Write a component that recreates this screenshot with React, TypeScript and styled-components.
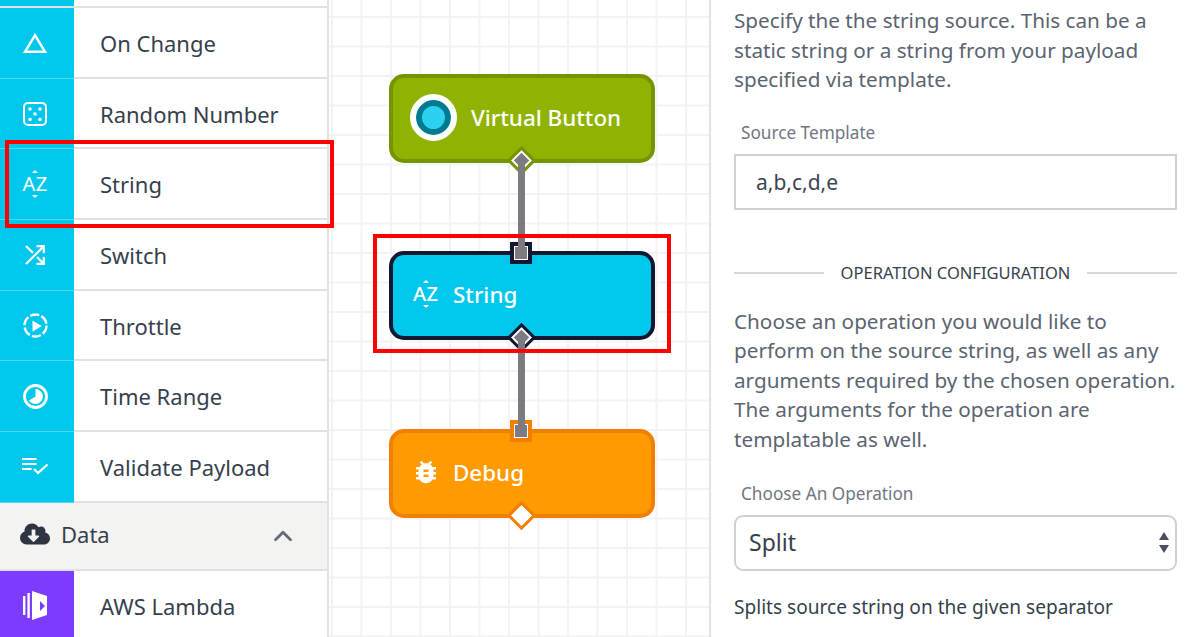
import React from "react";
import styled, { createGlobalStyle } from "styled-components";
import { ChevronUp } from "lucide-react";
import { FaCloudDownloadAlt } from "react-icons/fa";
import { MdBugReport } from "react-icons/md";

const FONT = "'Noto Sans', 'Open Sans', sans-serif";

const GlobalStyle = createGlobalStyle`
  html, body {
    margin: 0;
    padding: 0;
    background: #fff;
    overflow: hidden;
  }
  * { box-sizing: border-box; }
`;

const Page = styled.div`
  display: flex;
  width: 1200px;
  height: 637px;
  overflow: hidden;
  font-family: ${FONT};
  color: #363f4c;
`;

const Sidebar = styled.aside`
  position: relative;
  width: 329px;
  flex: none;
  border-right: 2px solid #e0e2e6;
  display: flex;
  flex-direction: column;
`;

const Stub = styled.div`
  height: 8px;
  flex: none;
  background: linear-gradient(to right, #00c7ec 74px, #fff 74px);
  border-bottom: 2px solid #dfe1e5;
`;

const Row = styled.div`
  height: 70.7px;
  flex: none;
  display: flex;
  align-items: stretch;
  border-bottom: 2px solid #dfe1e5;
  &:last-child { border-bottom: 0; }
`;

const IconCell = styled.div<{ $tone: string }>`
  width: 74px;
  margin-bottom: -2px;
  padding-right: 4px;
  flex: none;
  display: flex;
  align-items: center;
  justify-content: center;
  color: #fff;
  background: ${(p) => p.$tone};
  border-bottom: 1px solid rgba(255, 255, 255, 0.3);
`;

const RowLabel = styled.div`
  padding: 1px 0 0 26px;
  display: flex;
  align-items: center;
  font-size: 22px;
`;

const GroupHeader = styled.div`
  height: 68px;
  flex: none;
  display: flex;
  align-items: center;
  padding: 0 29px 3px 20px;
  background: #f3f3f2;
  border-bottom: 2px solid #dfe1e5;
  font-size: 22px;
  gap: 11px;
`;

const GroupChevron = styled.span`
  margin: 4px 0 0 auto;
  display: flex;
  color: #636a75;
`;

const AzIcon = styled.span<{ $size: number }>`
  position: relative;
  display: inline-block;
  width: 25px;
  font-size: ${(p) => p.$size}px;
  line-height: 1;
  letter-spacing: 0.5px;
  text-align: center;
  color: #fff;
  &::before, &::after {
    content: "";
    position: absolute;
    left: 50%;
    margin-left: -3px;
    border-left: 3px solid transparent;
    border-right: 3px solid transparent;
  }
  &::before { top: -4px; border-bottom: 3px solid #fff; }
  &::after { bottom: -4px; border-top: 3px solid #fff; }
`;

const Canvas = styled.main`
  position: relative;
  width: 380px;
  flex: none;
  background-color: #fff;
  background-image:
    linear-gradient(to right, #f3f3f5 1.5px, transparent 1.5px),
    linear-gradient(to bottom, #f3f3f5 1.5px, transparent 1.5px);
  background-size: 29.5px 29.5px;
  background-position: 2px 16px;
`;

const Wire = styled.div<{ $top: number }>`
  position: absolute;
  left: 189px;
  top: ${(p) => p.$top}px;
  width: 6.5px;
  height: 92px;
  background: #7d7b80;
  z-index: 3;
`;

const Node = styled.div<{ $top: number; $fill: string; $line: string }>`
  position: absolute;
  left: 60px;
  top: ${(p) => p.$top}px;
  width: 266px;
  height: 88.5px;
  padding-bottom: 2px;
  display: flex;
  align-items: center;
  border-radius: 15px;
  border: 4px solid ${(p) => p.$line};
  background: ${(p) => p.$fill};
  color: #fff;
  font-size: 22.4px;
  font-weight: 500;
`;

const NodeIcon = styled.span<{ $width: number; $inset: number }>`
  width: ${(p) => p.$width}px;
  padding-left: ${(p) => p.$inset}px;
  flex: none;
  display: flex;
  justify-content: center;
`;

const ButtonDot = styled.span`
  display: block;
  width: 47px;
  height: 47px;
  border-radius: 50%;
  background: #2cd0f0;
  border: 6px solid #fff;
  box-shadow: inset 0 0 0 6px #007a90;
`;

const OutPort = styled.span<{ $line: string; $inner: string }>`
  position: absolute;
  left: 120.5px;
  bottom: -9.5px;
  width: 15px;
  height: 15px;
  transform: rotate(45deg);
  background: ${(p) => p.$inner};
  border: 2px solid #fff;
  outline: 3px solid ${(p) => p.$line};
  z-index: 2;
`;

const InPort = styled.span<{ $line: string }>`
  position: absolute;
  left: 121px;
  top: -9px;
  width: 14px;
  height: 14px;
  background: #7d7b80;
  border: 1.5px solid #fff;
  outline: 4.5px solid ${(p) => p.$line};
  z-index: 2;
`;

const Highlight = styled.div`
  position: absolute;
  border: 4px solid #ff0000;
  pointer-events: none;
  z-index: 5;
`;

const SidebarHighlight = styled(Highlight)`
  left: 5px;
  top: 140px;
  width: 329px;
  height: 88px;
`;

const CanvasHighlight = styled(Highlight)`
  left: 44px;
  top: 234px;
  width: 298px;
  height: 119px;
`;

const Panel = styled.section`
  flex: 1;
  border-left: 2px solid #e0e2e6;
  padding: 6px 23px 0 23px;
  display: flex;
  flex-direction: column;
`;

const Help = styled.p`
  margin: 0;
  font-size: 20.7px;
  line-height: 29.5px;
  color: #5b6470;
`;

const FieldLabel = styled.label<{ $gap: number }>`
  display: block;
  margin: ${(p) => p.$gap}px 0 9px 7px;
  font-size: 17.2px;
  line-height: 24px;
  color: #6f7782;
`;

const TextInput = styled.div`
  height: 56px;
  border: 2px solid #cdd1d6;
  padding-left: 20px;
  display: flex;
  align-items: center;
  font-size: 21px;
  color: #3c4350;
`;

const SelectBox = styled.div`
  position: relative;
  height: 56px;
  border: 2px solid #cdd1d6;
  border-radius: 9px;
  padding: 0 0 3px 13px;
  display: flex;
  align-items: center;
  font-size: 23px;
  color: #363f4c;
`;

const SelectArrows = styled.svg`
  position: absolute;
  right: 5px;
  top: 15px;
`;

const Divider = styled.div`
  display: flex;
  align-items: center;
  gap: 17px;
  margin: 49px 0 20px;
  font-size: 16.5px;
  line-height: 28px;
  color: #363f4c;
  &::before, &::after {
    content: "";
    flex: 1;
    height: 2px;
    background: #d4d8dd;
  }
`;

const Note = styled.p`
  margin: 22px 0 0;
  font-size: 19.1px;
  line-height: 28px;
  color: #363f4c;
`;

const TriangleIcon = () => (
  <svg width="24" height="20" viewBox="0 0 24 20" fill="none" stroke="#fff" strokeWidth="2.4">
    <path d="M12 2.2 L22 18.8 H2 Z" />
  </svg>
);

const DiceIcon = () => (
  <svg width="24" height="24" viewBox="0 0 24 24" fill="#fff">
    <rect x="1" y="1" width="22" height="22" rx="4" fill="none" stroke="#fff" strokeWidth="2" />
    <circle cx="7" cy="7" r="1.8" />
    <circle cx="17" cy="7" r="1.8" />
    <circle cx="12" cy="12" r="1.8" />
    <circle cx="7" cy="17.5" r="1.8" />
    <circle cx="17" cy="17.5" r="1.8" />
  </svg>
);

const SwitchIcon = () => (
  <svg width="20" height="20" viewBox="0 0 20 20" fill="none" stroke="#fff" strokeWidth="2.2">
    <path d="M1 19 L18.5 1.5 M11.5 1.2 H18.8 V8" />
    <path d="M1 1 L8 8 M12 12 L18.5 18.5 M11.5 18.8 H18.8 V12" />
  </svg>
);

const ThrottleIcon = () => (
  <svg width="25" height="25" viewBox="0 0 25 25" fill="none">
    <circle cx="12.5" cy="12.5" r="11" stroke="#fff" strokeWidth="2.4" strokeDasharray="9.3 2.2" />
    <path d="M9.5 7.5 L18.7 13 L9.5 18.7 Z" fill="#fff" />
  </svg>
);

const ClockIcon = () => (
  <svg width="25" height="25" viewBox="0 0 25 25" fill="none">
    <circle cx="12.5" cy="12.5" r="11" stroke="#fff" strokeWidth="2.8" />
    <path d="M12.5 5 A7.5 7.5 0 1 1 6 16.5 L12.5 12.5 Z" fill="#fff" />
  </svg>
);

const ValidateIcon = () => (
  <svg width="26" height="17" viewBox="0 0 26 17" fill="none" stroke="#fff" strokeWidth="2">
    <path d="M0 1 H14.5 M0 6 H14.5 M0 11 H9.5" />
    <path d="M12 11 L16 15 L25.5 6.5" strokeWidth="2.3" />
  </svg>
);

const LambdaIcon = () => (
  <svg width="24" height="30" viewBox="0 0 24 30" fill="#fff">
    <rect x="0" y="5" width="2.4" height="19" />
    <rect x="4.4" y="2" width="2.4" height="25" />
    <path d="M9 0 L24 5 V24 L9 29 Z M17 10 V20 L22 15 Z" fillRule="evenodd" />
  </svg>
);

const triggers = [
  { label: "On Change", icon: <TriangleIcon /> },
  { label: "Random Number", icon: <DiceIcon /> },
  { label: "String", icon: <AzIcon $size={20}>AZ</AzIcon> },
  { label: "Switch", icon: <SwitchIcon /> },
  { label: "Throttle", icon: <ThrottleIcon /> },
  { label: "Time Range", icon: <ClockIcon /> },
  { label: "Validate Payload", icon: <ValidateIcon /> },
];

export default function App() {
  return (
    <Page>
      <GlobalStyle />
      <Sidebar>
        <Stub />
        {triggers.map((t) => (
          <Row key={t.label}>
            <IconCell $tone="#00c7ec">{t.icon}</IconCell>
            <RowLabel>{t.label}</RowLabel>
          </Row>
        ))}
        <GroupHeader>
          <FaCloudDownloadAlt size={30} color="#2f3540" />
          Data
          <GroupChevron>
            <ChevronUp size={30} strokeWidth={2.2} />
          </GroupChevron>
        </GroupHeader>
        <Row>
          <IconCell $tone="#7c3cff">
            <LambdaIcon />
          </IconCell>
          <RowLabel>AWS Lambda</RowLabel>
        </Row>
        <SidebarHighlight />
      </Sidebar>

      <Canvas>
        <Wire $top={161} />
        <Wire $top={338} />
        <Node $top={74} $fill="#8fb300" $line="#769400">
          <NodeIcon $width={78} $inset={3}>
            <ButtonDot />
          </NodeIcon>
          Virtual Button
          <OutPort $line="#769400" $inner="#7d7b80" />
        </Node>
        <Node $top={251} $fill="#00c7ec" $line="#12182f">
          <NodeIcon $width={60} $inset={5}>
            <AzIcon $size={20}>AZ</AzIcon>
          </NodeIcon>
          String
          <InPort $line="#12182f" />
          <OutPort $line="#12182f" $inner="#7d7b80" />
        </Node>
        <Node $top={429} $fill="#ff9a00" $line="#f27f00">
          <NodeIcon $width={60} $inset={5}>
            <MdBugReport size={30} color="#fff" />
          </NodeIcon>
          Debug
          <InPort $line="#f27f00" />
          <OutPort $line="#f27f00" $inner="#fff" />
        </Node>
        <CanvasHighlight />
      </Canvas>

      <Panel>
        <Help>
          Specify the the string source. This can be a static string or a string from your payload
          specified via template.
        </Help>
        <FieldLabel $gap={26}>Source Template</FieldLabel>
        <TextInput>a,b,c,d,e</TextInput>
        <Divider>OPERATION CONFIGURATION</Divider>
        <Help>
          Choose an operation you would like to perform on the source string, as well as any
          arguments required by the chosen operation. The arguments for the operation are
          templatable as well.
        </Help>
        <FieldLabel $gap={28}>Choose An Operation</FieldLabel>
        <SelectBox>
          Split
          <SelectArrows width="12" height="22" viewBox="0 0 12 22" fill="#4a505a">
            <path d="M6 0 L11 8 H1 Z M1 13 H11 L6 21 Z" />
          </SelectArrows>
        </SelectBox>
        <Note>Splits source string on the given separator</Note>
      </Panel>
    </Page>
  );
}
